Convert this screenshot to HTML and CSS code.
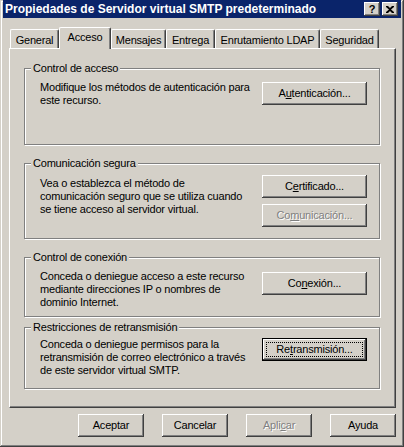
FILE: index.html
```html
<!DOCTYPE html>
<html lang="es">
<head>
<meta charset="utf-8">
<title>Propiedades de Servidor virtual SMTP predeterminado</title>
<link rel="stylesheet" href="styles.css">
</head>
<body>
<div class="window">
  <div class="titlebar">
    <span class="title">Propiedades de Servidor virtual SMTP predeterminado</span>
    <div class="tbtns">
      <span class="tbtn tbtn-help">?</span>
      <span class="tbtn tbtn-close"><svg width="8" height="7" viewBox="0 0 8 7"><path d="M0 0h2l2 2 2-2h2v1L5 3.5 8 6v1H6L4 5 2 7H0V6l3-2.5L0 1z" fill="#000"/></svg></span>
    </div>
  </div>
  <div class="client">
    <div class="tabs">
      <div class="tab t-general">General</div>
      <div class="tab t-acceso selected">Acceso</div>
      <div class="tab t-mensajes">Mensajes</div>
      <div class="tab t-entrega">Entrega</div>
      <div class="tab t-ldap">Enrutamiento LDAP</div>
      <div class="tab t-seg">Seguridad</div>
    </div>
    <div class="panel">
      <div class="group g1">
        <div class="glabel">Control de acceso</div>
        <p class="desc">Modifique los métodos de autenticación para<br>este recurso.</p>
        <div class="bcol"><div class="btn">A<u>u</u>tenticación...</div></div>
      </div>
      <div class="group g2">
        <div class="glabel">Comunicación segura</div>
        <p class="desc">Vea o establezca el método de<br>comunicación seguro que se utiliza cuando<br>se tiene acceso al servidor virtual.</p>
        <div class="bcol">
          <div class="btn">C<u>e</u>rtificado...</div>
          <div class="btn disabled">Co<u>m</u>unicación...</div>
        </div>
      </div>
      <div class="group g3">
        <div class="glabel">Control de conexión</div>
        <p class="desc">Conceda o deniegue acceso a este recurso<br>mediante direcciones IP o nombres de<br>dominio Internet.</p>
        <div class="bcol"><div class="btn">Co<u>n</u>exión...</div></div>
      </div>
      <div class="group g4">
        <div class="glabel">Restricciones de retransmisión</div>
        <p class="desc">Conceda o deniegue permisos para la<br>retransmisión de correo electrónico a través<br>de este servidor virtual SMTP.</p>
        <div class="bcol"><div class="btn default"><span class="focus">Re<u>t</u>ransmisión...</span></div></div>
      </div>
    </div>
    <div class="footer">
      <div class="btn fbtn">Aceptar</div>
      <div class="btn fbtn">Cancelar</div>
      <div class="btn fbtn disabled">Apli<u>c</u>ar</div>
      <div class="btn fbtn">Ayuda</div>
    </div>
  </div>
</div>
</body>
</html>
```
FILE: styles.css
```css
* { box-sizing: border-box; }
html, body { margin: 0; padding: 0; background: #d4d0c8; }
body {
  font-family: "Liberation Sans", Arial, sans-serif;
  font-size: 11px;
  line-height: 13px;
  letter-spacing: -0.2px;
  color: #000;
}
.window {
  width: 404px;
  height: 447px;
  padding: 0 3px 3px 3px;
  background: #d4d0c8;
  box-shadow: inset -1px -1px #404040, inset 1px 1px #d4d0c8, inset -2px -2px #808080, inset 2px 2px #fff;
  display: flex;
  flex-direction: column;
}
.titlebar {
  height: 18px;
  background: #0a246a;
  display: flex;
  align-items: center;
  justify-content: space-between;
  padding: 0 3px 0 2px;
}
.title {
  color: #fff;
  font-weight: bold;
  font-size: 12px;
  letter-spacing: 0;
  white-space: nowrap;
}
.tbtns { display: flex; gap: 2px; }
.tbtn {
  width: 16px;
  height: 14px;
  background: #d4d0c8;
  box-shadow: inset -1px -1px #404040, inset 1px 1px #fff, inset -2px -2px #808080;
  display: flex;
  align-items: center;
  justify-content: center;
  font-weight: bold;
  font-size: 11px;
  line-height: 12px;
  letter-spacing: 0;
}
.tbtn-help { padding-bottom: 1px; }
.tbtn svg { display: block; }
.client {
  flex: 1;
  display: flex;
  flex-direction: column;
  padding: 9px 5px 0 6px;
}
.tabs {
  display: flex;
  align-items: flex-end;
  height: 21px;
  padding-left: 1px;
  position: relative;
  z-index: 1;
}
.tab {
  height: 19px;
  border-top: 1px solid #fff;
  border-left: 1px solid #fff;
  border-right: 1px solid #404040;
  border-radius: 2px 2px 0 0;
  box-shadow: inset -1px 0 #808080;
  text-align: center;
  padding-top: 4px;
  white-space: nowrap;
  background: #d4d0c8;
}
.tab.selected {
  height: 22px;
  margin-bottom: -1px;
  padding-top: 3px;
}
.t-general { width: 49px; }
.t-acceso { width: 52px; }
.t-mensajes { width: 55px; }
.t-entrega { width: 49px; }
.t-ldap { width: 105px; }
.t-seg { width: 59px; }
.panel {
  height: 360px;
  border: 1px solid;
  border-color: #fff #404040 #404040 #fff;
  box-shadow: inset -1px -1px #808080;
  padding: 19px 0 0 14px;
  display: flex;
  flex-direction: column;
}
.group {
  position: relative;
  width: 356px;
  border: 1px solid #808080;
  box-shadow: inset 1px 1px #fff, 1px 1px #fff;
  display: flex;
  align-items: flex-start;
  padding: 0 12px 0 15px;
}
.glabel {
  position: absolute;
  left: 6px;
  top: -7px;
  padding: 0 2px;
  background: #d4d0c8;
  white-space: nowrap;
}
.desc { margin: 0; white-space: nowrap; }
.bcol {
  margin-left: auto;
  display: flex;
  flex-direction: column;
  gap: 6px;
}
.g1 { height: 77px; padding-top: 12px; }
.g1 .bcol { margin-top: 1px; }
.g2 { height: 76px; margin-top: 18px; padding-top: 11px; }
.g2 .desc { margin-top: 2px; }
.g3 { height: 60px; margin-top: 18px; padding-top: 12px; }
.g3 .bcol { margin-top: 2px; }
.g4 { height: 62px; margin-top: 10px; padding-top: 10px; }
.btn {
  width: 105px;
  height: 23px;
  background: #d4d0c8;
  box-shadow: inset -1px -1px #404040, inset 1px 1px #fff, inset -2px -2px #808080;
  display: flex;
  align-items: center;
  justify-content: center;
  white-space: nowrap;
}
.btn.disabled {
  color: #808080;
  text-shadow: 1px 1px #fff;
}
.btn.default {
  box-shadow: inset 0 0 0 1px #000, inset -2px -2px #404040, inset 2px 2px #fff, inset -3px -3px #808080;
  padding: 4px;
}
.focus {
  flex: 1;
  align-self: stretch;
  display: flex;
  align-items: center;
  justify-content: center;
  border: 1px dotted #000;
}
.footer {
  display: flex;
  justify-content: flex-end;
  gap: 18px;
  margin-top: 6px;
}
.fbtn { width: 66px; }
```
